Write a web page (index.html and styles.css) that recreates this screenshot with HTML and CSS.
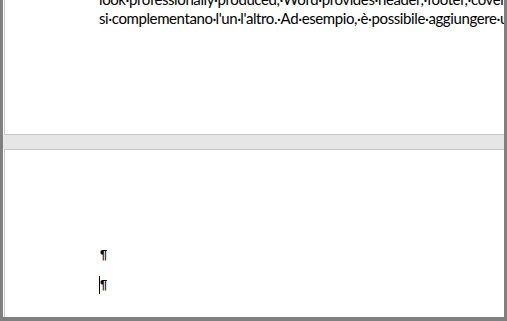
FILE: index.html
```html
<!DOCTYPE html>
<html>
<head>
<meta charset="utf-8">
<link rel="stylesheet" href="styles.css">
</head>
<body>
<div class="window">
  <div class="viewport">
    <div class="page page-top">
      <div class="body-text">
        <p class="line">look·professionally·produced,·Word·provides·header,·footer,·cover·page,·and·text·box·designs·that</p>
        <p class="line">si·complementano·l'un·l'altro.·Ad·esempio,·è·possibile·aggiungere·una·copertina·coordinata</p>
      </div>
    </div>
    <div class="gap"></div>
    <div class="page page-bottom">
      <p class="para"><span class="mark">¶</span></p>
      <p class="para"><span class="caret"></span><span class="mark">¶</span></p>
    </div>
  </div>
</div>
</body>
</html>
```

FILE: styles.css
```css
html, body {
  margin: 0;
  padding: 0;
}
body {
  width: 507px;
  height: 321px;
  overflow: hidden;
  background: #808080;
}
.window {
  width: 507px;
  height: 321px;
  box-sizing: border-box;
  padding: 0 3px 4px 3px;
  background: #808080;
}
.viewport {
  height: 100%;
  background: #ffffff;
  overflow: hidden;
  display: flex;
  flex-direction: column;
}
.page {
  margin-left: 1px;
  border-left: 1px solid #c6c6c6;
  background: #ffffff;
}
.page-top {
  height: 134px;
  flex: none;
  border-bottom: 1px solid #c6c6c6;
  overflow: hidden;
}
.gap {
  height: 14px;
  flex: none;
  background: #e6e6e6;
}
.page-bottom {
  flex: 1;
  border-top: 1px solid #c6c6c6;
  padding-top: 95px;
  padding-left: 95px;
}
.body-text {
  margin-top: -10px;
  padding-left: 94px;
  font-family: "Lato", "Open Sans", sans-serif;
  font-size: 15px;
  letter-spacing: -0.4px;
  color: #000;
}
.line {
  margin: 0;
  line-height: 19px;
  white-space: nowrap;
}
.para {
  margin: 0 0 11px 0;
  line-height: 19px;
  height: 19px;
  font-family: "Liberation Sans", sans-serif;
  font-size: 13px;
  color: #000;
  display: flex;
  align-items: center;
}
.mark {
  font-weight: bold;
}
.caret {
  width: 1px;
  height: 18px;
  background: #000;
  margin-left: -1px;
}
```
